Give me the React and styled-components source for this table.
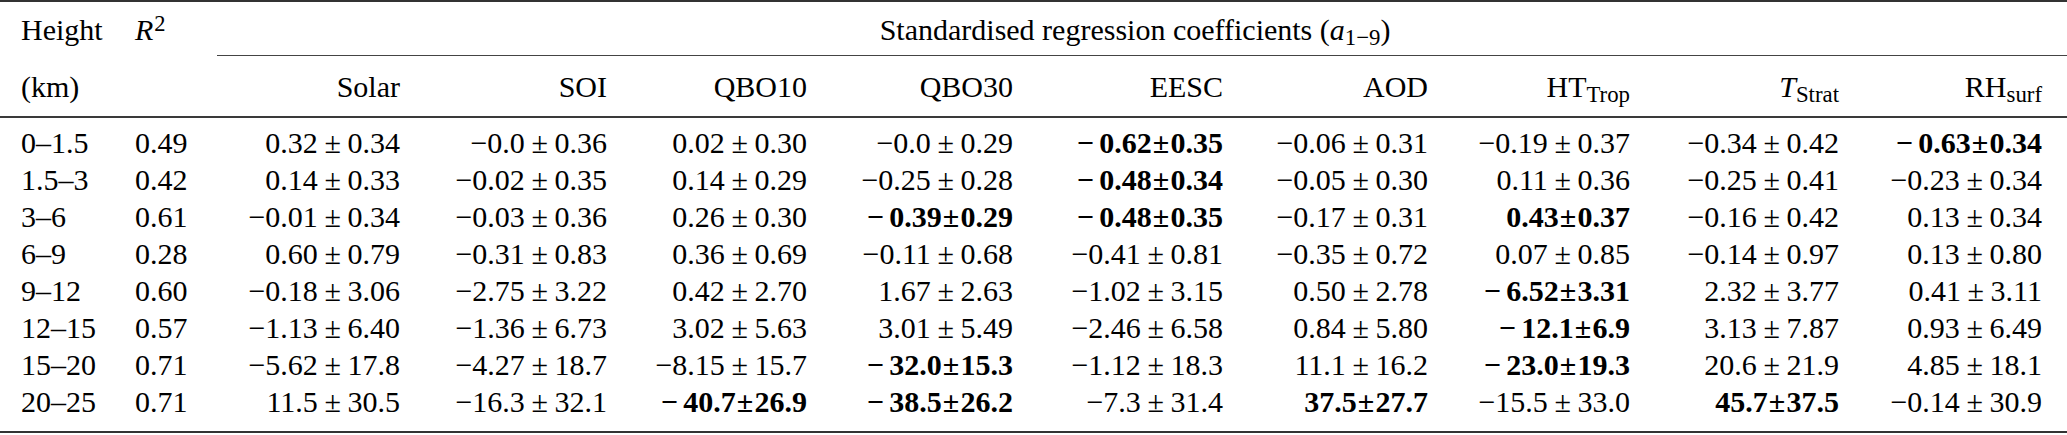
import styled, { createGlobalStyle } from 'styled-components'

const GlobalStyle = createGlobalStyle`
  html, body {
    margin: 0;
    padding: 0;
    background: #fff;
  }
`

const Table = styled.table`
  width: 2067px;
  table-layout: fixed;
  border-collapse: separate;
  border-spacing: 0;
  font-family: "Liberation Serif", "Times New Roman", serif;
  font-size: 30px;
  line-height: 37px;
  color: #000;
`

const HeadCell = styled.td`
  padding: 0;
  white-space: nowrap;
  vertical-align: baseline;
  text-align: ${p => (p.$align || 'right')};
  padding-left: ${p => (p.$first ? '21px' : '0')};
`

const TopCell = styled(HeadCell)`
  border-top: 2px solid #333;
  padding-top: 9px;
  padding-bottom: 7px;
`

const SpanCell = styled(TopCell)`
  text-align: center;
  padding-right: 14px;
  border-bottom: 1px solid #444;
`

const SubHeadCell = styled(HeadCell)`
  padding-top: 12px;
  padding-bottom: 11px;
  border-bottom: 2px solid #3a3a3a;
`

const Cell = styled.td`
  padding: 0;
  white-space: nowrap;
  vertical-align: baseline;
  text-align: ${p => (p.$align || 'right')};
  padding-left: ${p => (p.$first ? '21px' : '0')};
  padding-top: ${p => (p.$top ? '6px' : '0')};
  padding-bottom: ${p => (p.$bottom ? '11px' : '0')};
  border-bottom: ${p => (p.$bottom ? '2px solid #333' : 'none')};
  font-weight: ${p => (p.$bold ? 700 : 400)};
`

const Sub = styled.sub`
  font-size: 0.76em;
  vertical-align: -0.24em;
  line-height: 0;
`

const Sup = styled.sup`
  font-size: 0.75em;
  vertical-align: 0.4em;
  line-height: 0;
  margin-left: 1px;
`

const Ital = styled.i`
  font-style: italic;
`

const Pm = styled.span`
  margin: 0 ${p => (p.$bold ? '0.04em' : '0.22em')};
`

const Minus = styled.span`
  margin-right: ${p => (p.$bold ? '0.18em' : '0')};
`

const widths = [135, 82, 183, 207, 200, 206, 210, 205, 202, 209, 203, 25]

const rows = [
  ['0–1.5', '0.49', ['0.32|0.34', '-0.0|0.36', '0.02|0.30', '-0.0|0.29', '*-0.62|0.35', '-0.06|0.31', '-0.19|0.37', '-0.34|0.42', '*-0.63|0.34']],
  ['1.5–3', '0.42', ['0.14|0.33', '-0.02|0.35', '0.14|0.29', '-0.25|0.28', '*-0.48|0.34', '-0.05|0.30', '0.11|0.36', '-0.25|0.41', '-0.23|0.34']],
  ['3–6', '0.61', ['-0.01|0.34', '-0.03|0.36', '0.26|0.30', '*-0.39|0.29', '*-0.48|0.35', '-0.17|0.31', '*0.43|0.37', '-0.16|0.42', '0.13|0.34']],
  ['6–9', '0.28', ['0.60|0.79', '-0.31|0.83', '0.36|0.69', '-0.11|0.68', '-0.41|0.81', '-0.35|0.72', '0.07|0.85', '-0.14|0.97', '0.13|0.80']],
  ['9–12', '0.60', ['-0.18|3.06', '-2.75|3.22', '0.42|2.70', '1.67|2.63', '-1.02|3.15', '0.50|2.78', '*-6.52|3.31', '2.32|3.77', '0.41|3.11']],
  ['12–15', '0.57', ['-1.13|6.40', '-1.36|6.73', '3.02|5.63', '3.01|5.49', '-2.46|6.58', '0.84|5.80', '*-12.1|6.9', '3.13|7.87', '0.93|6.49']],
  ['15–20', '0.71', ['-5.62|17.8', '-4.27|18.7', '-8.15|15.7', '*-32.0|15.3', '-1.12|18.3', '11.1|16.2', '*-23.0|19.3', '20.6|21.9', '4.85|18.1']],
  ['20–25', '0.71', ['11.5|30.5', '-16.3|32.1', '*-40.7|26.9', '*-38.5|26.2', '-7.3|31.4', '*37.5|27.7', '-15.5|33.0', '*45.7|37.5', '-0.14|30.9']],
]

function Value({ raw }) {
  const bold = raw.startsWith('*')
  const [val, err] = raw.replace('*', '').split('|')
  const neg = val.startsWith('-')
  return (
    <>
      {neg && <Minus $bold={bold}>−</Minus>}
      {neg ? val.slice(1) : val}
      <Pm $bold={bold}>±</Pm>
      {err}
    </>
  )
}

export default function App() {
  return (
    <>
      <GlobalStyle />
      <Table>
        <colgroup>
          {widths.map((w, i) => <col key={i} style={{ width: w }} />)}
        </colgroup>
        <thead>
          <tr>
            <TopCell $align="left" $first>Height</TopCell>
            <TopCell $align="left"><Ital>R</Ital><Sup>2</Sup></TopCell>
            <SpanCell colSpan={10}>
              Standardised regression coefficients (<Ital>a</Ital><Sub>1−9</Sub>)
            </SpanCell>
          </tr>
          <tr>
            <SubHeadCell $align="left" $first>(km)</SubHeadCell>
            <SubHeadCell />
            <SubHeadCell>Solar</SubHeadCell>
            <SubHeadCell>SOI</SubHeadCell>
            <SubHeadCell>QBO10</SubHeadCell>
            <SubHeadCell>QBO30</SubHeadCell>
            <SubHeadCell>EESC</SubHeadCell>
            <SubHeadCell>AOD</SubHeadCell>
            <SubHeadCell>HT<Sub>Trop</Sub></SubHeadCell>
            <SubHeadCell><Ital>T</Ital><Sub>Strat</Sub></SubHeadCell>
            <SubHeadCell>RH<Sub>surf</Sub></SubHeadCell>
            <SubHeadCell />
          </tr>
        </thead>
        <tbody>
          {rows.map(([h, r2, vals], i) => {
            const top = i === 0
            const bottom = i === rows.length - 1
            return (
              <tr key={h}>
                <Cell $align="left" $first $top={top} $bottom={bottom}>{h}</Cell>
                <Cell $align="left" $top={top} $bottom={bottom}>{r2}</Cell>
                {vals.map((v, j) => (
                  <Cell key={j} $bold={v.startsWith('*')} $top={top} $bottom={bottom}>
                    <Value raw={v} />
                  </Cell>
                ))}
                <Cell $top={top} $bottom={bottom} />
              </tr>
            )
          })}
        </tbody>
      </Table>
    </>
  )
}
